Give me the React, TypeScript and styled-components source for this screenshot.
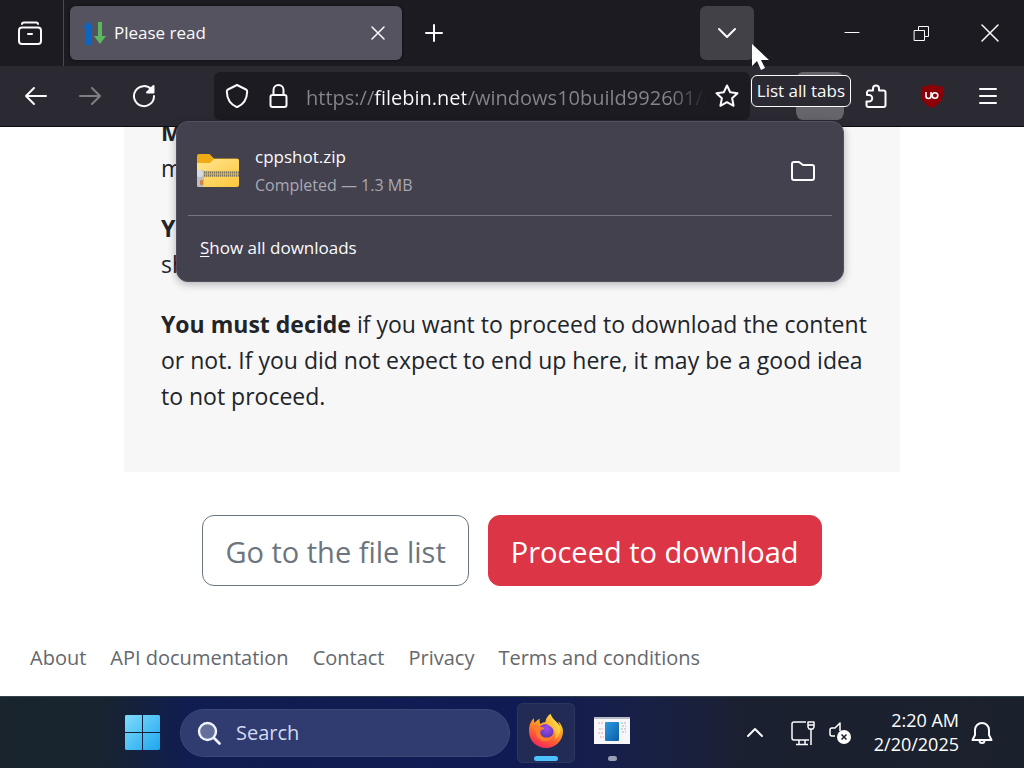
import React from "react";
import styled, { createGlobalStyle, css } from "styled-components";

const GlobalStyle = createGlobalStyle`
  *, *::before, *::after { box-sizing: border-box; }
  html, body, #root { height: 100%; margin: 0; }
  body { font-family: "Open Sans", "Noto Sans", sans-serif; overflow: hidden; }
  button, input { font: inherit; color: inherit; }
  button { padding: 0; border: 0; background: none; }
  p { margin: 0; }
`;

const Desktop = styled.div`
  display: flex;
  flex-direction: column;
  height: 100vh;
  background: #fff;
`;

/* ---------- Tab strip ---------- */

const TabStrip = styled.header`
  position: relative;
  flex: none;
  display: flex;
  align-items: center;
  height: 66px;
  background: #1c1b22;
  color: #fbfbfe;
`;

const IconButton = styled.button<{ $width?: number; $dim?: boolean; $filled?: boolean }>`
  flex: none;
  display: flex;
  align-items: center;
  justify-content: center;
  width: ${(p) => p.$width ?? 54}px;
  height: 54px;
  border-radius: 6px;
  color: #fbfbfe;
  background: ${(p) => (p.$filled ? "#424147" : "transparent")};
  opacity: ${(p) => (p.$dim ? 0.4 : 1)};
`;

const ViewCell = styled.div`
  flex: none;
  display: flex;
  align-items: center;
  width: 64px;
  height: 100%;
  padding-left: 3px;
  border-right: 1px solid #4a4950;
`;

const Tab = styled.div`
  display: flex;
  align-items: center;
  flex: 0 1 332px;
  height: 54px;
  margin-left: 6px;
  padding: 0 6px 0 12px;
  border-radius: 6px;
  background: #55535f;
  box-shadow: 0 0 3px #0c0b10;
`;

const TabTitle = styled.span`
  flex: 1;
  padding-left: 8px;
  font-size: 17px;
  line-height: 26px;
`;

const TabClose = styled(IconButton)`
  height: 36px;
`;

const WindowControls = styled.div`
  display: flex;
  margin-left: 63px;
`;

const Spacer = styled.div`
  flex: 1;
`;

/* ---------- Toolbar ---------- */

const Toolbar = styled.nav`
  position: relative;
  z-index: 2;
  flex: none;
  display: flex;
  align-items: center;
  height: 61px;
  padding: 0 9px;
  background: #2b2a33;
  border-bottom: 1px solid #0c0b10;
  color: #fbfbfe;
`;

const ButtonGroup = styled.div`
  display: flex;
  align-items: center;
  gap: 2px;
`;

const UrlBar = styled.div`
  flex: 1;
  min-width: 0;
  display: flex;
  align-items: center;
  height: 48px;
  margin: 0 43px;
  padding: 0 2px;
  border-radius: 6px;
  background: #1c1b22;
`;

const UrlInput = styled.input`
  flex: 1;
  min-width: 0;
  height: 36px;
  margin-left: 6px;
  padding: 2px 0 0;
  border: 0;
  outline: 0;
  font-size: 20px;
  -webkit-text-fill-color: transparent;
  background: linear-gradient(
    90deg,
    #86858c 0 68px,
    #fbfbfe 68px 160px,
    #86858c 160px calc(100% - 36px),
    transparent 100%
  );
  -webkit-background-clip: text;
  background-clip: text;
`;

const DownloadsAnchor = styled.div`
  position: relative;
`;

const DownloadsButton = styled(IconButton)`
  height: 48px;
  border: solid transparent;
  border-width: 0 3px;
  border-radius: 9px;
  background: #66656c;
  background-clip: padding-box;
`;

const Tooltip = styled.div`
  position: absolute;
  z-index: 5;
  top: 3px;
  right: -4px;
  padding: 3px 5px;
  border: 1px solid #fbfbfe;
  border-radius: 6px;
  background: #2b2a33;
  font-size: 17px;
  line-height: 24px;
  white-space: nowrap;
`;

const DownloadsPanel = styled.section`
  position: absolute;
  z-index: 4;
  top: 49px;
  right: 3px;
  width: 668px;
  padding: 11px 11px 10px;
  border: 1px solid #52505c;
  border-radius: 12px;
  background: #42414d;
  box-shadow: 0 2px 8px rgba(12, 11, 16, 0.3);
`;

const DownloadRow = styled.div`
  display: flex;
  align-items: center;
  height: 83px;
  padding: 0 2px 6px 8px;
  border-bottom: 1px solid #76757f;
`;

const DownloadText = styled.div`
  flex: 1;
  padding-left: 15px;
`;

const FileName = styled.div`
  font-size: 17px;
  line-height: 29px;
`;

const FileStatus = styled.div`
  font-size: 16px;
  line-height: 29px;
  color: #a9a8b2;
`;

const ShowAll = styled.button`
  display: block;
  width: 100%;
  height: 48px;
  margin-top: 7px;
  padding: 0 12px;
  text-align: left;
  font-size: 17px;
`;

const Accelerator = styled.span`
  text-decoration: underline;
  text-underline-offset: 2px;
`;

/* ---------- Web page ---------- */

const Page = styled.main`
  flex: 1;
  min-height: 0;
  display: flex;
  flex-direction: column;
  justify-content: flex-end;
  overflow: hidden;
  background: #fff;
  color: #212529;
`;

const Card = styled.article`
  flex: none;
  align-self: center;
  width: calc(100% - 248px);
  padding: 36px 36px 34px 37px;
  background: #f7f7f8;
`;

const Paragraph = styled.p`
  margin-bottom: 24px;
  font-size: 23px;
  line-height: 36px;
  white-space: nowrap;
`;

const Actions = styled.div`
  flex: none;
  display: flex;
  justify-content: center;
  gap: 19px;
  padding: 43px 0 56px;
`;

const ActionLink = styled.a<{ $danger?: boolean }>`
  padding: 13px 22px 11px;
  border: 1px solid #6c757d;
  border-radius: 12px;
  font-size: 29px;
  line-height: 45px;
  color: #6c757d;
  text-decoration: none;
  white-space: nowrap;
  ${(p) =>
    p.$danger &&
    css`
      border-color: #dc3545;
      background: #dc3545;
      color: #fff;
    `}
`;

const Footer = styled.footer`
  flex: none;
  display: flex;
  gap: 24px;
  padding: 0 30px 22px;
`;

const FooterLink = styled.a`
  font-size: 20px;
  line-height: 32px;
  color: #64686d;
  text-decoration: none;
  white-space: nowrap;
`;

/* ---------- Taskbar ---------- */

const Taskbar = styled.footer`
  flex: none;
  display: flex;
  align-items: center;
  height: 72px;
  padding: 0 23px 0 117px;
  border-top: 1px solid #34424c;
  background: linear-gradient(
    90deg,
    #19242d 0%,
    #18242f 10%,
    #101d50 18%,
    #101b54 50%,
    #182048 62%,
    #1b2030 73%,
    #1b212c 100%
  );
  color: #fff;
`;

const SearchBox = styled.label`
  display: flex;
  align-items: center;
  flex: 0 1 330px;
  min-width: 0;
  height: 48px;
  margin: 0 7px 0 11px;
  padding: 0 16px;
  gap: 15px;
  border: 1px solid #3c4878;
  border-radius: 24px;
  background: #303b70;
`;

const SearchInput = styled.input`
  flex: 1;
  min-width: 0;
  padding: 0;
  border: 0;
  outline: 0;
  background: none;
  font-size: 20px;
  &::placeholder {
    color: #d3daf0;
    opacity: 1;
  }
`;

const AppButton = styled.button<{ $active?: boolean }>`
  flex: none;
  display: flex;
  flex-direction: column;
  align-items: center;
  justify-content: flex-end;
  gap: 5px;
  width: 58px;
  height: 60px;
  padding-bottom: 2px;
  border-radius: 6px;
  background: ${(p) => (p.$active ? "#222b54" : "transparent")};
  box-shadow: ${(p) => (p.$active ? "inset 0 0 0 1px #2d365e" : "none")};
  & + & {
    margin-left: 8px;
  }
  &::after {
    content: "";
    width: ${(p) => (p.$active ? 24 : 9)}px;
    height: 5px;
    border-radius: 3px;
    background: ${(p) => (p.$active ? "#4cc2ff" : "#9a9fb5")};
  }
`;

const AppIcon = styled.span`
  display: flex;
  align-items: center;
  height: 40px;
`;

const Tray = styled.div`
  display: flex;
  align-items: center;
  margin-left: auto;
`;

const TrayButton = styled(IconButton)`
  height: 48px;
`;

const Clock = styled.time`
  width: 105px;
  margin: 0 4px 2px 0;
  font-size: 18px;
  line-height: 24px;
  text-align: right;
  white-space: nowrap;
`;

const Pointer = styled.svg`
  position: absolute;
  z-index: 6;
  top: -28px;
  right: 78px;
`;

/* ---------- Drawings ---------- */

type IconProps = { size?: number; w?: number; children: React.ReactNode };

const Line = ({ size = 24, w = 2, children }: IconProps) => (
  <svg
    width={size}
    height={size}
    viewBox="0 0 24 24"
    fill="none"
    stroke="currentColor"
    strokeWidth={w}
    strokeLinecap="round"
    strokeLinejoin="round"
    aria-hidden="true"
  >
    {children}
  </svg>
);

const FirefoxLogo = () => (
  <svg width="36" height="36" viewBox="0 0 36 36" aria-hidden="true">
    <defs>
      <linearGradient id="flame" x1="0.8" y1="0" x2="0.3" y2="1">
        <stop offset="0" stopColor="#fff04a" />
        <stop offset="0.35" stopColor="#ffad1f" />
        <stop offset="0.7" stopColor="#ff5a36" />
        <stop offset="1" stopColor="#f0245f" />
      </linearGradient>
      <radialGradient id="globe" cx="0.55" cy="0.3" r="0.7">
        <stop offset="0" stopColor="#a04bf0" />
        <stop offset="1" stopColor="#5636ad" />
      </radialGradient>
      <linearGradient id="tail" x1="1" y1="0" x2="0" y2="1">
        <stop offset="0" stopColor="#fff257" />
        <stop offset="1" stopColor="#ff8b20" />
      </linearGradient>
    </defs>
    <path
      d="M33.6 13c-.8-1.900-2.300-3.900-3.500-4.500.9 1.900 1.500 3.700 1.700 5.100C29.900 8.800 24.200 7 22.500 1c-3.300 2.200-4.900 5.600-4.800 8-2 .1-3.800.8-5.300 1.900-.9-1.600-1-3.400-.6-5.100-2.200 1-3.900 2.600-5.100 4-.8-1-.8-3.100-.7-4.700C2.900 8 .8 12.500 1 18.700 1.300 28 8.900 35 18 35c9.300 0 17-7.300 17-16.800 0-1.800-.5-3.700-1.400-5.200z"
      fill="url(#flame)"
    />
    <circle cx="18" cy="18.500" r="7.500" fill="url(#globe)" />
    <path
      d="M5.500 13.500c2.500-1.400 5-.9 6.700.6 1.500-.4 3 .2 4.200 1-.4 1.500-2.300 1.700-3.700 2.400-1.200 3 .6 6.300 4 7 3.300.5 6.500-.8 8.300-2.600-.5 4.100-4.100 6.500-8.300 6.300-5-.3-8.700-4.100-8.600-8.500-1.300-1-2.400-4.600-2.600-6.200z"
      fill="#ff7b2d"
    />
    <path
      d="M22.500 1c1.700 6 7.400 7.800 9.300 12.600 1.500 5-.9 10.400-5 12.800 1.800-5.400-.4-10-3.600-12.400-2.300-1.700-5.100-2.700-5.500-5C17.600 6.600 19.200 3.200 22.500 1z"
      fill="url(#tail)"
    />
  </svg>
);

const ZipFolder = () => (
  <svg width="44" height="36" viewBox="0 0 44 36" aria-hidden="true">
    <defs>
      <linearGradient id="folder" x1="0" y1="0" x2="1" y2="1">
        <stop offset="0" stopColor="#ffe591" />
        <stop offset="1" stopColor="#fdc63c" />
      </linearGradient>
    </defs>
    <path d="M1 3a2 2 0 0 1 2-2h10.500l4.500 4.500H41a2 2 0 0 1 2 2V12H1z" fill="#eeab16" />
    <path d="M1 10h13l4-4h23a2 2 0 0 1 2 2v24a2 2 0 0 1-2 2H3a2 2 0 0 1-2-2z" fill="url(#folder)" />
    <rect x="3" y="18" width="40" height="6" fill="#d9b45c" />
    <path d="M4 19.500h39M4 22.500h39" stroke="#75705f" strokeWidth="2" strokeDasharray="1 1" />
    <rect x="1" y="17" width="7" height="17" rx="2" fill="#b9bec1" />
    <rect x="1" y="17" width="6" height="7" rx="2" fill="#d6dbdd" />
    <rect x="4" y="27" width="3" height="5" rx="1" fill="#d6813f" />
  </svg>
);

const StartLogo = () => (
  <svg width="36" height="36" viewBox="0 0 36 36" aria-hidden="true">
    <defs>
      <linearGradient id="start" gradientUnits="userSpaceOnUse" x1="0" y1="0" x2="36" y2="36">
        <stop offset="0" stopColor="#7fdcfb" />
        <stop offset="1" stopColor="#1ba4ee" />
      </linearGradient>
    </defs>
    <path d="M1 0h16v17H0V1zM18 0h16l1 1v16H18zM0 18h17v17H1l-1-1zM18 18h17v16l-1 1H18z" fill="url(#start)" />
  </svg>
);

const footerLinks = ["About", "API documentation", "Contact", "Privacy", "Terms and conditions"];

export default function App() {
  return (
    <Desktop>
      <GlobalStyle />
      <TabStrip>
        <ViewCell>
          <IconButton aria-label="Firefox View">
            <svg width="26" height="26" viewBox="0 0 26 26" fill="none" stroke="currentColor" strokeWidth="2" strokeLinecap="round" aria-hidden="true">
              <path d="M5 4c0-1 1-1.500 2-1.500h12c1 0 2 .5 2 1.500" />
              <rect x="2" y="7.500" width="22" height="16.500" rx="3" />
              <path d="M11 14h4" />
            </svg>
          </IconButton>
        </ViewCell>
        <Tab>
          <svg width="24" height="26" viewBox="0 0 24 26" aria-hidden="true">
            <path d="M6 1l5 7H9v17H3V8H1z" fill="#0b66c3" />
            <path d="M16 2h4v14h4l-6 8-6-8h4z" fill="#5cb85c" />
          </svg>
          <TabTitle>Please read</TabTitle>
          <TabClose $width={36} aria-label="Close tab">
            <Line size={18} w={2}><path d="M4 4l16 16M20 4L4 20" /></Line>
          </TabClose>
        </Tab>
        <IconButton $width={64} aria-label="New tab">
          <Line><path d="M12 4v16M4 12h16" /></Line>
        </IconButton>
        <Spacer />
        <IconButton $filled aria-label="List all tabs">
          <Line><path d="M4 8l8 8 8-8" /></Line>
        </IconButton>
        <WindowControls>
          <IconButton $width={69} aria-label="Minimize">
            <Line w={1}><path d="M5 11.500h14" /></Line>
          </IconButton>
          <IconButton $width={69} aria-label="Restore">
            <Line w={1}><path d="M5.500 9.500h10v10h-10zM9.500 9.500v-4h10v10h-4" /></Line>
          </IconButton>
          <IconButton $width={69} aria-label="Close">
            <Line w={1.5}><path d="M4 4l16 16M20 4L4 20" /></Line>
          </IconButton>
        </WindowControls>
      </TabStrip>

      <Toolbar>
        <IconButton aria-label="Back">
          <Line><path d="M22 12H2M10 4l-8 8 8 8" /></Line>
        </IconButton>
        <IconButton $dim aria-label="Forward">
          <Line><path d="M2 12h20M14 4l8 8-8 8" /></Line>
        </IconButton>
        <IconButton aria-label="Reload">
          <Line>
            <path d="M19.500 5.500A10 10 0 1 0 22 12" />
            <path d="M21.500 2v6.500H15z" fill="currentColor" />
          </Line>
        </IconButton>
        <UrlBar>
          <IconButton $width={42} aria-label="Tracking protection">
            <Line><path d="M12 1l9 4.500c1 .5 1.200 1 1.200 2C22 15 18.500 20.500 12 23.200 5.500 20.500 2 15 1.800 7.500c0-1 .2-1.500 1.200-2z" /></Line>
          </IconButton>
          <IconButton $width={42} aria-label="Site information">
            <Line>
              <rect x="3.500" y="11" width="16" height="12" rx="2" />
              <path d="M6.500 11V6a5 5 0 0 1 10 0v5" />
            </Line>
          </IconButton>
          <UrlInput aria-label="Address" defaultValue="https://filebin.net/windows10build992601/cppshot.zip" />
          <IconButton $width={42} aria-label="Bookmark this page">
            <Line><path d="M12 1.500l3.200 6.800 7.300.9-5.400 5.100 1.500 7.500L12 18.200l-6.600 3.600 1.500-7.500-5.400-5.100 7.300-.9z" /></Line>
          </IconButton>
        </UrlBar>
        <ButtonGroup>
          <DownloadsAnchor>
            <DownloadsButton aria-label="Downloads" />
            <Tooltip role="tooltip">List all tabs</Tooltip>
            <Pointer width="17" height="26" viewBox="0 0 17 26">
              <path d="M0 0v22l5-5 4 9 4-2-4-8h8z" fill="#fff" />
            </Pointer>
            <DownloadsPanel aria-label="Downloads">
              <DownloadRow>
                <ZipFolder />
                <DownloadText>
                  <FileName>cppshot.zip</FileName>
                  <FileStatus>Completed — 1.3 MB</FileStatus>
                </DownloadText>
                <IconButton aria-label="Show in folder">
                  <Line><path d="M1 5a2 2 0 0 1 2-2h5l4 3h9a2 2 0 0 1 2 2v11a2 2 0 0 1-2 2H3a2 2 0 0 1-2-2z" /></Line>
                </IconButton>
              </DownloadRow>
              <ShowAll>
                <Accelerator>S</Accelerator>how all downloads
              </ShowAll>
            </DownloadsPanel>
          </DownloadsAnchor>
          <IconButton aria-label="Extensions">
            <Line>
              <path d="M3 11V8.500a2 2 0 0 1 2-2h4V4.500a3 3 0 0 1 6 0v2h4.500a2 2 0 0 1 2 2V21a2 2 0 0 1-2 2H4.500a2 2 0 0 1-2-2v-3.500H5a3.200 3.200 0 0 0 0-6.500z" />
            </Line>
          </IconButton>
          <IconButton aria-label="uBlock Origin">
            <svg width="24" height="24" viewBox="0 0 24 24" fill="none" aria-hidden="true">
              <path d="M12 0c3.500 2 7 2.500 11 2.500v8C23 17 18 21.500 12 24 6 21.500 1 17 1 10.500v-8C5 2.500 8.500 2 12 0z" fill="#8b0006" />
              <path d="M6 8v4a2.500 2.500 0 0 0 5 0V8" stroke="#fff" strokeWidth="1.600" />
              <circle cx="15" cy="11.500" r="2.800" stroke="#fff" strokeWidth="1.600" />
            </svg>
          </IconButton>
          <IconButton aria-label="Open application menu">
            <Line><path d="M4 5h16M4 12h16M4 19h16" /></Line>
          </IconButton>
        </ButtonGroup>
      </Toolbar>

      <Page>
        <Card>
          <Paragraph>
            <b>M</b>
            <br />
            m
          </Paragraph>
          <Paragraph>
            <b>Yo</b>
            <br />
            sh
          </Paragraph>
          <Paragraph>
            <b>You must decide</b> if you want to proceed to download the content
            <br />
            or not. If you did not expect to end up here, it may be a good idea
            <br />
            to not proceed.
          </Paragraph>
        </Card>
        <Actions>
          <ActionLink href="#files">Go to the file list</ActionLink>
          <ActionLink href="#download" $danger>Proceed to download</ActionLink>
        </Actions>
        <Footer>
          {footerLinks.map((label) => (
            <FooterLink key={label} href="#">{label}</FooterLink>
          ))}
        </Footer>
      </Page>

      <Taskbar>
        <IconButton $width={52} aria-label="Start">
          <StartLogo />
        </IconButton>
        <SearchBox>
          <svg width="24" height="24" viewBox="0 0 24 24" aria-hidden="true">
            <circle cx="10.500" cy="10.500" r="8.500" fill="#65709a" stroke="#f0f4ff" strokeWidth="2.400" />
            <path d="M17 17l5.500 5.500" stroke="#f0f4ff" strokeWidth="2.600" strokeLinecap="round" />
          </svg>
          <SearchInput type="search" placeholder="Search" aria-label="Search" />
        </SearchBox>
        <AppButton $active aria-label="Firefox">
          <AppIcon><FirefoxLogo /></AppIcon>
        </AppButton>
        <AppButton aria-label="cppshot">
          <AppIcon>
            <svg width="36" height="27" viewBox="0 0 36 27" aria-hidden="true">
              <defs>
                <linearGradient id="app" x1="0" y1="0" x2="1" y2="1">
                  <stop offset="0" stopColor="#2c9be0" />
                  <stop offset="1" stopColor="#0b5da8" />
                </linearGradient>
              </defs>
              <path d="M0 0h36v27H0z" fill="#f7f7fa" />
              <path d="M0 0h36v2H0z" fill="#b9bcc6" />
              <rect x="11" y="5" width="14" height="19" rx="1" fill="url(#app)" />
              <path d="M4 6h6M5 12h4M4 16h5M6 20h4" stroke="#e3a5aa" strokeDasharray="2 1" />
              <path d="M27 6h6M28 9h4M27 12h6M28 15h4" stroke="#a7b0bd" strokeDasharray="2 1" />
            </svg>
          </AppIcon>
        </AppButton>
        <Tray>
          <TrayButton $width={50} aria-label="Show hidden icons">
            <Line size={24} w={2}><path d="M5 15l7-7 7 7" /></Line>
          </TrayButton>
          <TrayButton $width={46} aria-label="Network">
            <svg width="26" height="26" viewBox="0 0 26 26" fill="none" stroke="currentColor" strokeWidth="1.500" strokeLinejoin="round" aria-hidden="true">
              <path d="M16 2H4a2 2 0 0 0-2 2v14a2 2 0 0 0 2 2h15M6 24.500h12M9 20v4M15 20v4M18 2h6v5l-1 2h-4l-1-2zM21 9v16M18 5h6" />
            </svg>
          </TrayButton>
          <TrayButton $width={28} aria-label="Volume">
            <svg width="24" height="24" viewBox="0 0 24 24" fill="none" aria-hidden="true">
              <path d="M12 10V2L7 7H4a2 2 0 0 0-2 2v4a2 2 0 0 0 2 2h3" stroke="#fff" strokeWidth="1.500" strokeLinejoin="round" />
              <circle cx="16" cy="16" r="7" fill="#fff" />
              <path d="M13.500 13.500l5 5M18.500 13.500l-5 5" stroke="#1b212c" strokeWidth="1.500" />
            </svg>
          </TrayButton>
          <Clock>
            2:20 AM
            <br />
            2/20/2025
          </Clock>
          <TrayButton $width={38} aria-label="Notifications">
            <Line size={24} w={2}>
              <path d="M12 2a7 7 0 0 0-7 7v5l-2.500 5h19L19 14V9a7 7 0 0 0-7-7zM9.500 19.500a2.500 2.500 0 0 0 5 0" />
            </Line>
          </TrayButton>
        </Tray>
      </Taskbar>
    </Desktop>
  );
}
